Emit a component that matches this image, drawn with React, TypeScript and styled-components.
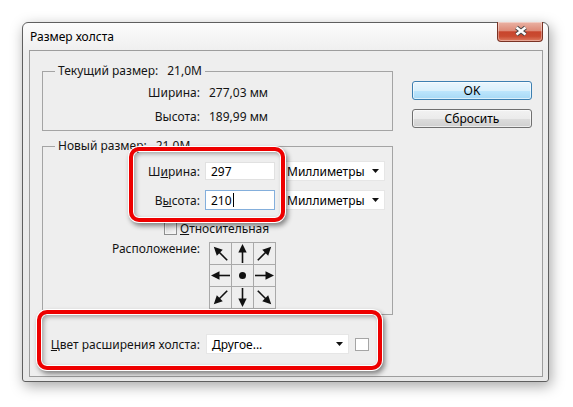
import React from "react";
import styled, { createGlobalStyle } from "styled-components";

const GlobalStyle = createGlobalStyle`
  html, body {
    margin: 0;
    padding: 0;
    background: #ffffff;
  }
  body {
    font-family: "Noto Sans", "Open Sans", sans-serif;
    font-size: 12px;
    color: #141414;
  }
`;

const anchors: (number | null)[] = [-135, -90, -45, 180, null, 0, 135, 90, 45];

const Arrow: React.FC<{ deg: number }> = ({ deg }) => (
  <ArrowSvg width="23" height="23" viewBox="0 0 23 23" $deg={deg}>
    <line x1="2" y1="11.5" x2="14" y2="11.5" stroke="#111" strokeWidth="1.6" />
    <polygon points="12.5,7.3 21,11.5 12.5,15.7" fill="#111" />
  </ArrowSvg>
);

const DropArrow = () => (
  <svg width="7" height="4" viewBox="0 0 7 4">
    <polygon points="0,0 7,0 3.5,4" fill="#111" />
  </svg>
);

const CanvasSizeDialog: React.FC = () => {
  return (
    <Page>
      <GlobalStyle />
      <Window>
        <TitleBar>
          <Title>Размер холста</Title>
          <CloseButton>
            <svg width="46" height="19" viewBox="0 0 46 19">
              <path d="M18.5 5.5 L27.5 12.5 M27.5 5.5 L18.5 12.5" stroke="#474747" strokeWidth="4.4" />
              <path d="M18.5 5.5 L27.5 12.5 M27.5 5.5 L18.5 12.5" stroke="#ffffff" strokeWidth="2.4" />
            </svg>
          </CloseButton>
        </TitleBar>
        <Frame>
          <Panel>
            <LeftCol>
              <Group>
                <Legend>
                  Текущий размер:<Amount>21,0M</Amount>
                </Legend>
                <InfoRows>
                  <InfoRow>
                    <Label>Ширина:</Label>
                    <span>277,03 мм</span>
                  </InfoRow>
                  <InfoRow>
                    <Label>Высота:</Label>
                    <span>189,99 мм</span>
                  </InfoRow>
                </InfoRows>
              </Group>

              <Group $gap={7}>
                <Legend>
                  Новый размер:<Amount>21,0M</Amount>
                </Legend>
                <FormRows>
                  <FieldRow>
                    <FieldLabel>
                      Ш<U>и</U>рина:
                    </FieldLabel>
                    <Field>297</Field>
                    <Select $pad={2}>
                      <span>Миллиметры</span>
                      <DropArrow />
                    </Select>
                  </FieldRow>
                  <FieldRow $gap={7}>
                    <FieldLabel>
                      В<U>ы</U>сота:
                    </FieldLabel>
                    <Field $focused>
                      210
                      <Caret />
                    </Field>
                    <Select $pad={2}>
                      <span>Миллиметры</span>
                      <DropArrow />
                    </Select>
                  </FieldRow>
                  <CheckRow>
                    <CheckBox />
                    <span>
                      <U>О</U>тносительная
                    </span>
                  </CheckRow>
                  <AnchorRow>
                    <AnchorLabel>Расположение:</AnchorLabel>
                    <AnchorGrid>
                      {anchors.map((deg, i) => (
                        <AnchorCell key={i}>{deg === null ? <Dot /> : <Arrow deg={deg} />}</AnchorCell>
                      ))}
                    </AnchorGrid>
                  </AnchorRow>
                </FormRows>
              </Group>

              <ColorRow>
                <ColorLabel>
                  <U>Ц</U>вет расширения холста:
                </ColorLabel>
                <Select $pad={5} $width={143}>
                  <span>Другое...</span>
                  <DropArrow />
                </Select>
                <Swatch />
              </ColorRow>
            </LeftCol>

            <RightCol>
              <Button $primary>OK</Button>
              <Button>Сбросить</Button>
            </RightCol>
          </Panel>
        </Frame>
      </Window>

      <Highlight $x={129} $y={147} $w={156} $h={75} />
      <Highlight $x={37} $y={310} $w={345} $h={60} />
    </Page>
  );
};

export default CanvasSizeDialog;

const Page = styled.div`
  position: relative;
  width: 573px;
  height: 407px;
  box-sizing: border-box;
  padding: 22px 0 0 22px;
  overflow: hidden;
`;

const Window = styled.div`
  width: 527px;
  height: 360px;
  box-sizing: border-box;
  border: 1px solid #5f5f5f;
  border-radius: 6px 6px 3px 3px;
  background: linear-gradient(to bottom, #fcfcfc 0px, #eeeeee 30px, #e8e8e8 100%);
  box-shadow: 2px 4px 14px rgba(0, 0, 0, 0.35);
  display: flex;
  flex-direction: column;
`;

const TitleBar = styled.div`
  display: flex;
  align-items: flex-start;
  height: 27px;
  flex-shrink: 0;
`;

const Title = styled.div`
  flex: 1;
  padding-left: 7px;
  line-height: 27px;
  color: #000;
`;

const CloseButton = styled.div`
  width: 46px;
  height: 20px;
  box-sizing: border-box;
  margin-top: -1px;
  margin-right: 5px;
  border: 1px solid #7a3325;
  border-top: none;
  border-radius: 0 0 4px 4px;
  background: linear-gradient(
    to bottom,
    #eab3a5 0%,
    #de8b78 45%,
    #c8452d 52%,
    #c94b31 75%,
    #de7d62 100%
  );
  box-shadow: inset 0 0 0 1px rgba(255, 255, 255, 0.35);
  svg {
    display: block;
  }
`;

const Frame = styled.div`
  flex: 1;
  display: flex;
  padding: 0 5px 4px 6px;
`;

const Panel = styled.div`
  flex: 1;
  display: flex;
  gap: 19px;
  padding: 12px 10px 0 12px;
  border: 1px solid #9d9d9d;
  background: #eeeeee;
`;

const LeftCol = styled.div`
  width: 351px;
  display: flex;
  flex-direction: column;
`;

const RightCol = styled.div`
  width: 120px;
  padding-top: 18px;
  display: flex;
  flex-direction: column;
  gap: 9px;
`;

const Group = styled.fieldset<{ $gap?: number }>`
  margin: ${({ $gap }) => $gap ?? 0}px 0 0 0;
  padding: 0;
  min-width: 0;
  border: 1px solid #a4a4a4;
`;

const Legend = styled.legend`
  margin-left: 12px;
  padding: 0 3px;
  line-height: 16px;
  color: #141414;
`;

const Amount = styled.span`
  margin-left: 9px;
`;

const InfoRows = styled.div`
  padding: 1px 0 2px;
`;

const InfoRow = styled.div`
  display: grid;
  grid-template-columns: 157px 1fr;
  column-gap: 9px;
  height: 24px;
  align-items: center;
`;

const Label = styled.span`
  text-align: right;
`;

const U = styled.span`
  text-decoration: underline;
`;

const FormRows = styled.div`
  padding: 6px 0 5px;
`;

const FieldRow = styled.div<{ $gap?: number }>`
  display: flex;
  align-items: center;
  height: 22px;
  margin-top: ${({ $gap }) => $gap ?? 0}px;
`;

const FieldLabel = styled.span`
  width: 157px;
  margin-right: 5px;
  text-align: right;
`;

const Field = styled.div<{ $focused?: boolean }>`
  width: 70px;
  height: ${({ $focused }) => ($focused ? 20 : 18)}px;
  box-sizing: border-box;
  padding-left: 5px;
  display: flex;
  align-items: center;
  background: #ffffff;
  border: 1px solid ${({ $focused }) => ($focused ? "#84afdc" : "#e1e1e1")};
  color: #000;
`;

const Caret = styled.span`
  width: 1px;
  height: 14px;
  margin-left: 1px;
  background: #000;
`;

const Select = styled.div<{ $pad: number; $width?: number }>`
  width: ${({ $width }) => $width ?? 101}px;
  height: 20px;
  box-sizing: border-box;
  margin-left: 9px;
  padding: 0 5px 0 ${({ $pad }) => $pad}px;
  display: flex;
  align-items: center;
  justify-content: space-between;
  background: #ffffff;
  border: 1px solid #e6e6e6;
  color: #000;
  svg {
    display: block;
  }
`;

const CheckRow = styled.div`
  display: flex;
  align-items: center;
  gap: 3px;
  height: 18px;
  margin-top: 8px;
  padding-left: 121px;
`;

const CheckBox = styled.div`
  width: 13px;
  height: 13px;
  box-sizing: border-box;
  border: 1px solid #8e8f8f;
  background: linear-gradient(135deg, #d9d9d9, #f7f7f7);
  box-shadow: inset 0 0 0 1px #f4f4f4;
`;

const AnchorRow = styled.div`
  display: flex;
  align-items: flex-start;
  margin-top: 5px;
`;

const AnchorLabel = styled.span`
  width: 157px;
  margin-right: 9px;
  text-align: right;
  line-height: 14px;
`;

const AnchorGrid = styled.div`
  display: grid;
  grid-template-columns: repeat(3, 22px);
  grid-auto-rows: 22px;
  border-left: 1px solid #a9a9a9;
  border-top: 1px solid #a9a9a9;
`;

const AnchorCell = styled.div`
  display: flex;
  align-items: center;
  justify-content: center;
  border-right: 1px solid #a9a9a9;
  border-bottom: 1px solid #a9a9a9;
  overflow: hidden;
`;

const ArrowSvg = styled.svg<{ $deg: number }>`
  flex-shrink: 0;
  transform: rotate(${({ $deg }) => $deg}deg);
`;

const Dot = styled.div`
  width: 7px;
  height: 7px;
  border-radius: 50%;
  background: #111;
`;

const ColorRow = styled.div`
  display: flex;
  align-items: center;
  height: 20px;
  margin-top: 19px;
  ${Select} {
    margin-left: 0;
  }
`;

const ColorLabel = styled.span`
  width: 158px;
  margin-right: 6px;
  text-align: right;
  white-space: nowrap;
`;

const Swatch = styled.div`
  width: 14px;
  height: 13px;
  box-sizing: border-box;
  margin-left: 6px;
  border: 1px solid #a5a5a5;
  background: #ffffff;
`;

const Button = styled.div<{ $primary?: boolean }>`
  height: 19px;
  box-sizing: border-box;
  display: flex;
  align-items: center;
  justify-content: center;
  border-radius: 3px;
  border: 1px solid ${({ $primary }) => ($primary ? "#3c7fb1" : "#707070")};
  background: ${({ $primary }) =>
    $primary
      ? "linear-gradient(to bottom, #eaf6fd 0%, #d9f0fc 50%, #bee6fd 51%, #a7d9f5 100%)"
      : "linear-gradient(to bottom, #f2f2f2 0%, #ebebeb 50%, #dddddd 51%, #cfcfcf 100%)"};
  box-shadow: inset 0 0 0 1px rgba(255, 255, 255, 0.6);
  color: #000;
`;

const Highlight = styled.div<{ $x: number; $y: number; $w: number; $h: number }>`
  position: absolute;
  left: ${({ $x }) => $x}px;
  top: ${({ $y }) => $y}px;
  width: ${({ $w }) => $w}px;
  height: ${({ $h }) => $h}px;
  box-sizing: border-box;
  border: 4px solid #ee0000;
  border-radius: 10px;
  pointer-events: none;
  box-shadow: 0 0 0 1px #ffffff, 2px 3px 5px 1px rgba(0, 0, 0, 0.45),
    inset 0 0 0 1px #ffffff, inset 2px 2px 4px 1px rgba(0, 0, 0, 0.3);
`;
